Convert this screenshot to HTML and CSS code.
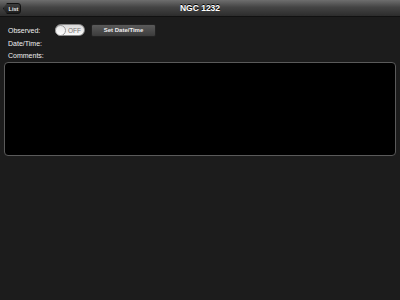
FILE: index.html
```html
<!DOCTYPE html>
<html>
<head>
<meta charset="utf-8">
<link rel="stylesheet" href="styles.css">
</head>
<body>
<header class="navbar">
  <button class="back">List</button>
  <h1 class="title">NGC 1232</h1>
</header>
<main class="content">
  <div class="row">
    <span class="label">Observed:</span>
    <span class="toggle"><span class="knob"></span><span class="off">OFF</span></span>
    <button class="btn">Set Date/Time</button>
  </div>
  <div class="row small"><span class="label">Date/Time:</span></div>
  <div class="row small"><span class="label">Comments:</span></div>
  <textarea class="comments"></textarea>
</main>
</body>
</html>
```
FILE: styles.css
```css
* { box-sizing: border-box; }
html, body { margin: 0; height: 100%; }
body {
  background: #1c1c1c;
  font-family: "Liberation Sans", Arial, sans-serif;
  color: #f0f0f0;
  font-size: 7px;
}
.navbar {
  position: relative;
  height: 17px;
  background: linear-gradient(#6e6e6e, #444 45%, #2c2c2c);
  border-bottom: 1px solid #111;
  display: flex;
  align-items: center;
  justify-content: center;
}
.title {
  margin: 0;
  font-size: 8.5px;
  font-weight: bold;
  color: #fff;
  text-shadow: 0 -1px 0 #000;
}
.back {
  position: absolute;
  left: 3px;
  top: 3px;
  height: 11px;
  width: 18px;
  padding: 0 0 0 3px;
  border: 1px solid #111;
  border-radius: 3px;
  background: linear-gradient(#3c3c3c, #1e1e1e);
  color: #eee;
  font: bold 5.5px "Liberation Sans", Arial, sans-serif;
  clip-path: polygon(0 50%, 4px 0, 100% 0, 100% 100%, 4px 100%);
}
.content {
  padding: 6px 8px 0 4px;
  display: flex;
  flex-direction: column;
}
.row {
  display: flex;
  align-items: center;
  padding-left: 4px;
  height: 14px;
}
.row.small { height: 12px; }
.label { width: 47px; }
.toggle {
  width: 30px;
  height: 12px;
  border-radius: 6px;
  background: linear-gradient(#d8d8d8, #fafafa);
  border: 1px solid #888;
  display: flex;
  align-items: center;
  position: relative;
}
.knob {
  width: 11px;
  height: 11px;
  border-radius: 50%;
  background: linear-gradient(#e8e8e8, #fff);
  border: 1px solid #9a9a9a;
  margin-left: -1px;
}
.off {
  color: #777;
  font-size: 6.5px;
  margin-left: 2px;
}
.btn {
  margin-left: 6px;
  width: 65px;
  height: 13px;
  border: 1px solid #222;
  border-radius: 2px;
  background: linear-gradient(#5a5a5a, #3c3c3c);
  color: #eee;
  font: bold 6px "Liberation Sans", Arial, sans-serif;
  padding: 0;
}
.comments {
  margin-top: 1px;
  width: 392px;
  height: 94px;
  background: #000;
  border: 1px solid #5a5a5a;
  border-radius: 4px;
  resize: none;
}
```
